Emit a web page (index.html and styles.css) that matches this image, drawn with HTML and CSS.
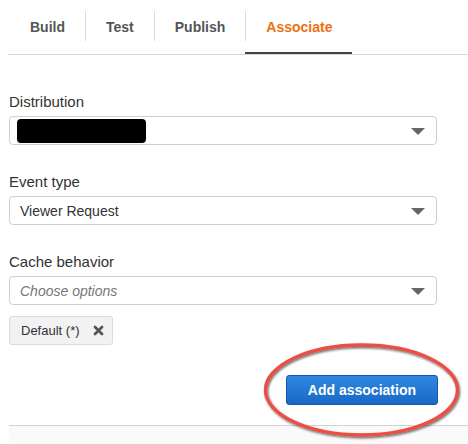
FILE: index.html
```html
<!DOCTYPE html>
<html>
<head>
<meta charset="utf-8">
<link rel="stylesheet" href="styles.css">
</head>
<body>
<div class="page">
  <nav class="tabs">
    <div class="tab"><span class="tab-label first">Build</span></div>
    <div class="tab"><span class="tab-label">Test</span></div>
    <div class="tab"><span class="tab-label">Publish</span></div>
    <div class="tab active"><span class="tab-label">Associate</span></div>
  </nav>
  <form class="form">
    <div class="field">
      <label class="label">Distribution</label>
      <div class="select">
        <span class="redacted"></span>
        <span class="caret"></span>
      </div>
    </div>
    <div class="field">
      <label class="label">Event type</label>
      <div class="select">
        <span class="value">Viewer Request</span>
        <span class="caret"></span>
      </div>
    </div>
    <div class="field last">
      <label class="label">Cache behavior</label>
      <div class="select">
        <span class="placeholder">Choose options</span>
        <span class="caret"></span>
      </div>
    </div>
    <div class="chips">
      <span class="chip">Default (*)
        <svg class="chip-x" width="11" height="11" viewBox="0 0 11 11"><path d="M2 2 L9 9 M9 2 L2 9" stroke="#555" stroke-width="2.8" stroke-linecap="round" fill="none"/></svg>
      </span>
    </div>
    <div class="actions">
      <button type="button" class="btn-primary">Add association</button>
    </div>
  </form>
  <div class="footer"></div>
  <svg class="annotation" width="468" height="444" viewBox="0 0 468 444">
    <defs>
      <filter id="sh" x="-20%" y="-20%" width="140%" height="140%">
        <feDropShadow dx="1" dy="1.5" stdDeviation="1" flood-color="#000" flood-opacity="0.6"/>
      </filter>
    </defs>
    <ellipse cx="361.5" cy="390" rx="96" ry="45" fill="none" stroke="#ec4d44" stroke-width="3.4" filter="url(#sh)"/>
  </svg>
</div>
</body>
</html>
```

FILE: styles.css
```css
* { box-sizing: border-box; }
html, body { margin: 0; padding: 0; background: #fff; }
body {
  font-family: "Liberation Sans", Arial, Helvetica, sans-serif;
  color: #333;
  width: 468px;
  height: 444px;
  overflow: hidden;
}
.page {
  position: relative;
  width: 468px;
  height: 444px;
  display: flex;
  flex-direction: column;
}
.tabs {
  display: flex;
  margin-left: 8px;
  border-bottom: 1px solid #d9d9d9;
  padding-left: 1px;
}
.tab {
  padding: 11px 0 11px;
  border-bottom: 2px solid transparent;
}
.tab.active { border-bottom-color: #444; }
.tab-label {
  display: block;
  height: 30px;
  line-height: 33px;
  padding: 0 20px;
  border-left: 1px solid #dcdcdc;
  font-size: 14px;
  font-weight: bold;
  color: #555;
}
.tab-label.first { border-left: none; padding-left: 21px; }
.tab.active .tab-label { color: #ec7211; }

.form {
  margin: 0 0 0 9px;
  width: 429px;
  padding: 37px 0 20px;
  display: flex;
  flex-direction: column;
}
.field { display: flex; flex-direction: column; margin-bottom: 27px; }
.field.last { margin-bottom: 11px; }
.label {
  font-size: 15px;
  line-height: 20px;
  color: #333;
  margin-bottom: 4px;
}
.select {
  display: flex;
  align-items: center;
  width: 428px;
  height: 29px;
  border: 1px solid #cfcfcf;
  border-radius: 4px;
  padding: 0 11px 0 10px;
  font-size: 14px;
  background: #fff;
}
.value { color: #333; }
.placeholder { color: #777; font-style: italic; }
.redacted {
  display: block;
  width: 129px;
  height: 24px;
  margin-left: -3px;
  background: #000;
  border-radius: 4px;
}
.caret {
  margin-left: auto;
  width: 0;
  height: 0;
  border-left: 7px solid transparent;
  border-right: 7px solid transparent;
  border-top: 7px solid #666;
  margin-top: 1px;
}
.chips { display: flex; }
.chip {
  display: flex;
  align-items: center;
  height: 29px;
  padding: 0 8px 0 11px;
  background: #f2f2f2;
  border: 1px solid #dcdcdc;
  border-radius: 3px;
  font-size: 13px;
  color: #333;
}
.chip-x { margin-left: 13px; }
.actions {
  display: flex;
  justify-content: flex-end;
  margin-top: 30px;
}
.btn-primary {
  height: 30px;
  padding: 0 21px;
  border: 1px solid #1558a8;
  border-radius: 3px;
  background: linear-gradient(#2f88e2, #1a68c6);
  color: #fff;
  font-family: "Liberation Sans", Arial, sans-serif;
  font-size: 14px;
  font-weight: bold;
}
.footer {
  flex: 1;
  margin-left: 9px;
  border-top: 1px solid #d3d3d3;
  background: #fafafa;
}
.annotation {
  position: absolute;
  left: 0;
  top: 0;
  pointer-events: none;
}
```
